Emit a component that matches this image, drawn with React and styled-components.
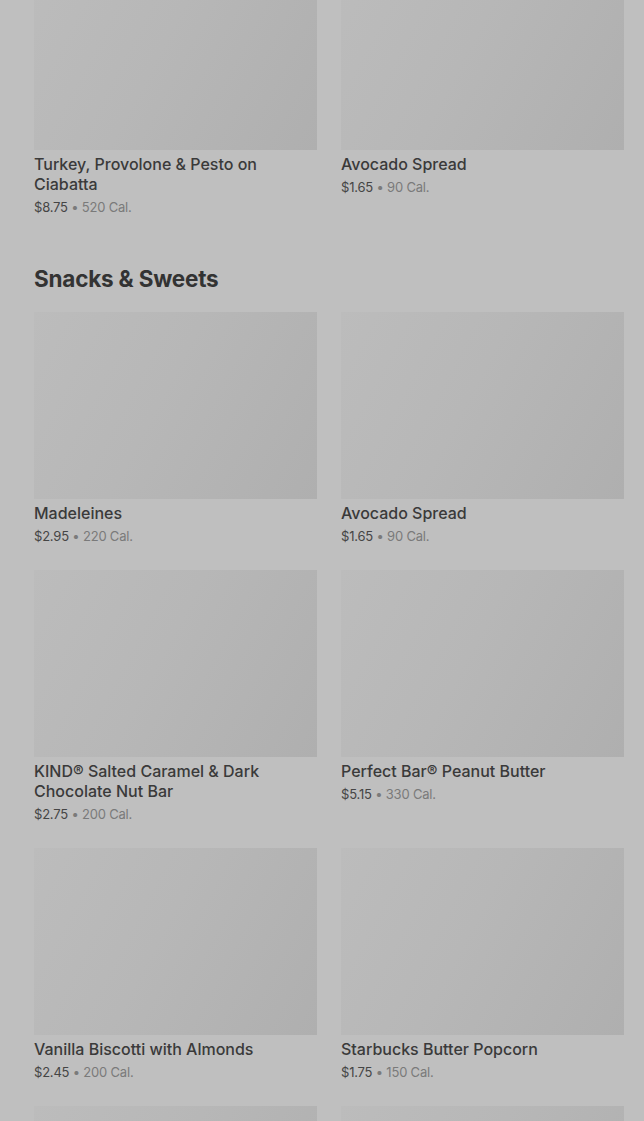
import React from "react";
import styled, { createGlobalStyle } from "styled-components";

const GlobalStyle = createGlobalStyle`
  html, body {
    margin: 0;
    padding: 0;
    background: #bfbfbf;
    overflow: hidden;
  }
  body {
    font-family: Inter, "Noto Sans", "Liberation Sans", sans-serif;
    -webkit-font-smoothing: antialiased;
  }
`;

const Page = styled.div`
  width: 644px;
  height: 1121px;
  overflow: hidden;
  background: #bfbfbf;
`;

// scrolled view: the first grid is partly above the fold
const Scroller = styled.div`
  margin-top: -37px;
  padding: 0 20px 0 34px;
`;

const Section = styled.section`
  & + & {
    margin-top: 49px;
  }
`;

const Heading = styled.h2`
  margin: 0 0 19px;
  font-size: 22.5px;
  line-height: 28px;
  font-weight: 700;
  letter-spacing: -0.2px;
  color: #333333;
`;

const Grid = styled.div`
  display: grid;
  grid-template-columns: 1fr 1fr;
  column-gap: 24px;
  row-gap: 25px;
`;

const Card = styled.div`
  display: flex;
  flex-direction: column;
  min-width: 0;
`;

const Thumb = styled.div`
  height: 187px;
  background: linear-gradient(118deg, #bcbcbc 0%, #b7b7b7 45%, #afafaf 100%);
`;

const Title = styled.div`
  margin-top: 4px;
  font-size: 16px;
  line-height: 20px;
  font-weight: 500;
  color: #3a3a3a;
  padding-right: 30px;
`;

const Meta = styled.div`
  margin-top: 4px;
  font-size: 13px;
  line-height: 18px;
  letter-spacing: -0.2px;
  color: #7a7a7a;
`;

const Price = styled.span`
  color: #454545;
`;

const sections = [
  {
    items: [
      { name: "Turkey, Provolone & Pesto on Ciabatta", price: "$8.75", cal: 520 },
      { name: "Avocado Spread", price: "$1.65", cal: 90 },
    ],
  },
  {
    title: "Snacks & Sweets",
    items: [
      { name: "Madeleines", price: "$2.95", cal: 220 },
      { name: "Avocado Spread", price: "$1.65", cal: 90 },
      { name: "KIND® Salted Caramel & Dark Chocolate Nut Bar", price: "$2.75", cal: 200 },
      { name: "Perfect Bar® Peanut Butter", price: "$5.15", cal: 330 },
      { name: "Vanilla Biscotti with Almonds", price: "$2.45", cal: 200 },
      { name: "Starbucks Butter Popcorn", price: "$1.75", cal: 150 },
      {},
      {},
    ],
  },
];

function MenuCard({ item }) {
  return (
    <Card>
      <Thumb />
      {item.name && <Title>{item.name}</Title>}
      {item.price && (
        <Meta>
          <Price>{item.price}</Price> • {item.cal} Cal.
        </Meta>
      )}
    </Card>
  );
}

export default function App() {
  return (
    <Page>
      <GlobalStyle />
      <Scroller>
        {sections.map((section, i) => (
          <Section key={i}>
            {section.title && <Heading>{section.title}</Heading>}
            <Grid>
              {section.items.map((item, j) => (
                <MenuCard key={j} item={item} />
              ))}
            </Grid>
          </Section>
        ))}
      </Scroller>
    </Page>
  );
}
